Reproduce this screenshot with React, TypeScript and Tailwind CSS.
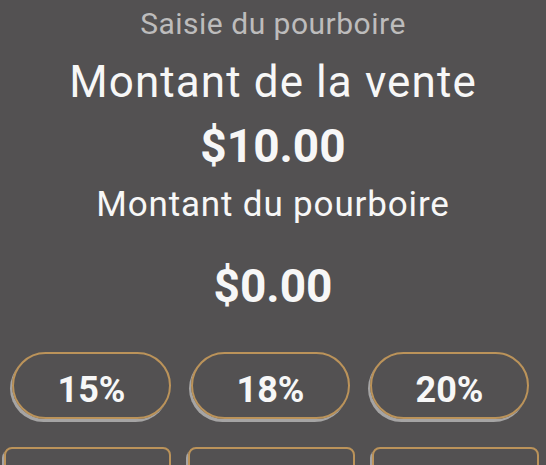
import React from 'react';

const tipRates = ['15%', '18%', '20%'];
const customRow = ['', '', ''];

export default function App() {
  return (
    <div className="h-[465px] w-[546px] overflow-hidden bg-[#535152] font-['Roboto',sans-serif] text-[#f7f7f7]">
      <div className="flex flex-col items-center pt-[9px]">
        <div className="text-[30px] leading-none tracking-[0.5px] text-[#bdbcbc]">Saisie du pourboire</div>
        <div className="mt-[21px] text-[44px] leading-none tracking-[1.1px]">Montant de la vente</div>
        <div className="mt-[19px] text-[46px] font-bold leading-none">$10.00</div>
        <div className="mt-[18px] text-[35px] leading-none tracking-[0.85px]">Montant du pourboire</div>
        <div className="mt-[41px] text-[46px] font-bold leading-none">$0.00</div>
      </div>

      <div className="mt-[43px] flex gap-[20px] pl-[12px]">
        {tipRates.map((rate) => (
          <button
            key={rate}
            type="button"
            className="flex h-[67px] w-[159px] items-center justify-center rounded-full border-2 border-[#bb935a] pt-2 text-[36px] font-bold leading-none shadow-[-2px_3px_0_#a5a4a4]"
          >
            {rate}
          </button>
        ))}
      </div>

      <div className="mt-[28px] flex gap-[17px] pl-[4px]">
        {customRow.map((label, i) => (
          <button
            key={i}
            type="button"
            className="h-[67px] w-[167px] rounded-lg border-2 border-[#bb935a] shadow-[-2px_3px_0_#a5a4a4]"
          >
            {label}
          </button>
        ))}
      </div>
    </div>
  );
}
